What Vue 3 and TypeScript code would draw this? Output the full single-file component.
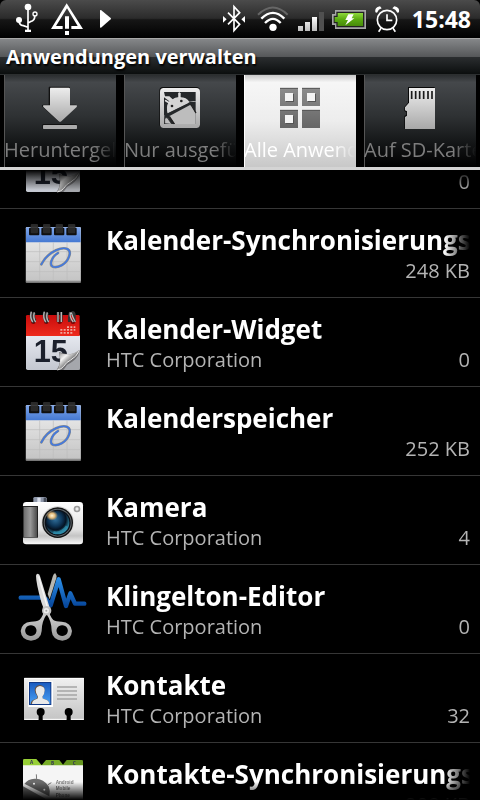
<script setup lang="ts">
interface AppEntry {
  name: string
  vendor: string
  size: string
  icon: string
}

interface Tab {
  label: string
  icon: string
}

const tabs: Tab[] = [
  { label: 'Heruntergel', icon: 'tab-download' },
  { label: 'Nur ausgefü', icon: 'tab-running' },
  { label: 'Alle Anwend', icon: 'tab-all' },
  { label: 'Auf SD-Karte', icon: 'tab-sd' },
]
const activeTab = 2

const apps: AppEntry[] = [
  { name: '', vendor: '', size: '0', icon: 'app-widget' },
  { name: 'Kalender-Synchronisierungs', vendor: '', size: '248 KB', icon: 'app-calendar' },
  { name: 'Kalender-Widget', vendor: 'HTC Corporation', size: '0', icon: 'app-widget' },
  { name: 'Kalenderspeicher', vendor: '', size: '252 KB', icon: 'app-calendar' },
  { name: 'Kamera', vendor: 'HTC Corporation', size: '4', icon: 'app-camera' },
  { name: 'Klingelton-Editor', vendor: 'HTC Corporation', size: '0', icon: 'app-ringtone' },
  { name: 'Kontakte', vendor: 'HTC Corporation', size: '32', icon: 'app-contacts' },
  { name: 'Kontakte-Synchronisierungs', vendor: '', size: '208 KB', icon: 'app-android' },
]
</script>

<template>
  <div class="screen">
    <svg class="sprites" aria-hidden="true">
      <defs>
        <linearGradient id="g-light" x1="0" y1="0" x2="0" y2="1">
          <stop offset="0" stop-color="#ededed" /><stop offset="1" stop-color="#a8a8a8" />
        </linearGradient>
        <linearGradient id="g-dark" x1="0" y1="0" x2="0" y2="1">
          <stop offset="0" stop-color="#8c8c8c" /><stop offset="1" stop-color="#666" />
        </linearGradient>
        <linearGradient id="g-page" x1="0" y1="0" x2="0" y2="1">
          <stop offset="0" stop-color="#f0f0f0" /><stop offset="1" stop-color="#c4c4c4" />
        </linearGradient>
        <linearGradient id="g-blue" x1="0" y1="0" x2="0" y2="1">
          <stop offset="0" stop-color="#7fa6ea" /><stop offset="1" stop-color="#4478d2" />
        </linearGradient>
        <linearGradient id="g-red" x1="0" y1="0" x2="0" y2="1">
          <stop offset="0" stop-color="#c80c0c" /><stop offset="1" stop-color="#ee2a1c" />
        </linearGradient>
        <linearGradient id="g-sheet" x1="0" y1="0" x2="0" y2="1">
          <stop offset="0" stop-color="#e6e9f0" /><stop offset="1" stop-color="#c3c7d0" />
        </linearGradient>
        <linearGradient id="g-curl" x1="0" y1="0" x2="1" y2="1">
          <stop offset="0.1" stop-color="#8a8a8a" /><stop offset="0.35" stop-color="#f4f4f4" />
          <stop offset="0.52" stop-color="#999" /><stop offset="0.6" stop-color="#555" />
        </linearGradient>
        <linearGradient id="g-body" x1="0" y1="0" x2="0" y2="1">
          <stop offset="0" stop-color="#fff" /><stop offset="0.65" stop-color="#e2e2e2" />
          <stop offset="0.8" stop-color="#c4c4c4" /><stop offset="1" stop-color="#fafafa" />
        </linearGradient>
        <linearGradient id="g-grip" x1="0" y1="0" x2="1" y2="0">
          <stop offset="0" stop-color="#6c6c6c" /><stop offset="0.5" stop-color="#999" /><stop offset="1" stop-color="#4c4c4c" />
        </linearGradient>
        <radialGradient id="g-lens" cx="0.4" cy="0.35" r="0.65">
          <stop offset="0" stop-color="#31709c" /><stop offset="0.45" stop-color="#0e3658" />
          <stop offset="0.7" stop-color="#041222" /><stop offset="1" stop-color="#2f8ba8" />
        </radialGradient>
        <radialGradient id="g-glow">
          <stop offset="0" stop-color="#fff6da" /><stop offset="0.5" stop-color="#e0b878" />
          <stop offset="1" stop-color="#c89858" stop-opacity="0" />
        </radialGradient>
        <linearGradient id="g-wave" x1="0" y1="0" x2="0" y2="1">
          <stop offset="0" stop-color="#2b8de6" /><stop offset="1" stop-color="#07479c" />
        </linearGradient>
        <linearGradient id="g-steel" x1="0" y1="0" x2="0" y2="1">
          <stop offset="0" stop-color="#d8d8d8" /><stop offset="1" stop-color="#999" />
        </linearGradient>
        <linearGradient id="g-photo" x1="0" y1="0" x2="0" y2="1">
          <stop offset="0" stop-color="#1a5cc0" /><stop offset="1" stop-color="#4aa0f4" />
        </linearGradient>
        <linearGradient id="g-battery" x1="0" y1="0" x2="0" y2="1">
          <stop offset="0" stop-color="#8ed83c" /><stop offset="0.5" stop-color="#5aaa10" /><stop offset="1" stop-color="#478a0a" />
        </linearGradient>
        <linearGradient id="g-bars" gradientUnits="userSpaceOnUse" x1="0" y1="50" x2="0" y2="94">
          <stop offset="0" stop-color="#fff" /><stop offset="1" stop-color="#bbb" />
        </linearGradient>
      </defs>

      <symbol id="tab-download" viewBox="114 45 132 138">
        <path d="M150 51h58q4 0 4 4v50h17q6 2 1 7l-46 42q-4 3-8 0l-46-42q-5-5 1-7h17V55q0-4 2-4z" fill="#111" transform="translate(-2 -1)" />
        <path d="M152 53h54q4 0 4 4v49h19q4 1 1 5l-46 43q-4 3-8 0l-46-43q-3-4 1-5h19V57q0-4 2-4z" fill="url(#g-light)" />
        <rect x="127" y="162" width="104" height="15" rx="3" fill="#111" />
        <rect x="129" y="165" width="102" height="12" rx="2" fill="#ababab" />
      </symbol>
      <symbol id="tab-running" viewBox="474 45 132 138">
        <rect x="478" y="51" width="122" height="122" rx="11" fill="#0c0c0c" />
        <rect x="480" y="54" width="120" height="120" rx="11" fill="url(#g-light)" />
        <path d="M492 66h95v28l-7-1-12 2q-9-13-27-13l1-13-7 0v13q-10 0-17 6l-10-9-13 0z" fill="#25282a" />
        <path d="M492 82l16 12q-11 14-5 35l-11 6zM571 95h16v67h-95l1-28 78-39z" fill="#25282a" />
        <path d="M503 129q-7-27 12-39 18-13 36-4 10 4 15 12z" fill="#d4d4d4" />
        <path d="M510 137l60-32 7 3 10 23v31h-62l-18-24z" fill="#bdbdbd" />
        <path d="M497 92l13 8M538 69l1 14" stroke="#ddd" stroke-width="5" stroke-linecap="round" />
        <path d="M573 104l15 25M508 139l15 23" stroke="#222" stroke-width="4" />
        <path d="M494 160v-13q4-8 9-2l12 17" fill="#bdbdbd" stroke="#222" stroke-width="2" />
        <circle cx="516" cy="108" r="4" fill="#222" /><circle cx="544" cy="93" r="4" fill="#222" />
      </symbol>
      <symbol id="tab-all" viewBox="114 45 132 138">
        <g fill="url(#g-dark)">
          <path d="M120 54h54v54h-54zM186 54h54v54h-54zM120 120h54v54h-54zM186 120h54v54h-54z" />
        </g>
        <path d="M120 55h54M186 55h54M120 121h54M186 121h54" stroke="#555" stroke-width="3" />
        <path d="M138 72h24v24h-24zM204 72h24v24h-24zM138 138h24v24h-24z" fill="#555" />
        <path d="M135 69h24v24h-24zM201 69h24v24h-24zM135 135h24v24h-24z" fill="#f4f4f4" />
      </symbol>
      <symbol id="tab-sd" viewBox="474 45 132 138">
        <path d="M504 51h80v125h-91v-38l6-4v-7l-6-4v-12l11-13z" fill="#080808" />
        <path d="M507 54h78v123h-90v-36l6-4v-13l-6-3v-9l12-14z" fill="url(#g-light)" />
        <path d="M515 63v24M527 63v24M539 63v24M551 63v24M564 63v24M576 63v24" stroke="#1a1a1a" stroke-width="5" />
      </symbol>

      <symbol id="app-calendar" viewBox="0 0 270 264">
        <g transform="translate(0 3)">
          <rect x="47" y="51" width="166" height="168" rx="3" fill="#777" />
          <rect x="48" y="52" width="164" height="162" rx="3" fill="url(#g-page)" />
          <path d="M48 97V54q0-2 2-2h160q2 0 2 2v43z" fill="url(#g-blue)" />
          <path d="M89 97v117M130 97v117M171 97v117M48 125h164M48 155h164M48 185h164" stroke="#bcbcbc" stroke-width="2" />
          <path d="M48 213h164" stroke="#999" stroke-width="2" />
          <g fill="#101010"><rect x="57" y="53" width="31" height="23" rx="3" /><rect x="94" y="53" width="31" height="23" rx="3" /><rect x="132" y="53" width="31" height="23" rx="3" /><rect x="169" y="53" width="31" height="23" rx="3" /></g>
          <g fill="#292929"><rect x="62" y="42" width="22" height="28" rx="3" /><rect x="99" y="42" width="22" height="28" rx="3" /><rect x="137" y="42" width="22" height="28" rx="3" /><rect x="174" y="42" width="22" height="28" rx="3" /></g>
          <path d="M63 52h20M100 52h20M138 52h20M175 52h20" stroke="#4a4a4a" stroke-width="2" />
          <path d="M94 163q15-29 44-42c28-13 48-5 39 19-8 23-33 35-48 30-11-4-7-27 15-41" fill="none" stroke="#8e8e86" stroke-width="8" stroke-linecap="round" />
          <path d="M94 163q15-29 44-42c28-13 48-5 39 19-8 23-33 35-48 30-11-4-7-27 15-41" fill="none" stroke="#4479df" stroke-width="5" stroke-linecap="round" />
        </g>
      </symbol>
      <symbol id="app-widget" viewBox="0 0 270 264">
        <g transform="translate(0 6)">
          <path d="M48 106h162v99q0 5-5 5H53q-5 0-5-5z" fill="url(#g-sheet)" />
          <path d="M48 108V49q0-4 4-4h153q4 0 4 4v59z" fill="url(#g-red)" />
          <g fill="#f0a69c">
            <path d="M171 79h6v5h-6zM181 79h6v5h-6zM191 79h5v5h-5zM151 87h6v5h-6zM161 87h6v5h-6zM171 87h6v5h-6zM181 87h6v5h-6zM191 87h5v5h-5zM151 96h6v5h-6zM161 96h6v5h-6zM171 96h6v5h-6zM181 96h6v5h-6z" />
          </g>
          <g fill="#740707"><circle cx="70" cy="65" r="7" /><circle cx="109" cy="65" r="7" /><circle cx="149" cy="65" r="7" /><circle cx="189" cy="65" r="7" /></g>
          <g fill="none" stroke="#333" stroke-width="8"><path d="M73 66q-13-6-9-29M112 66q-13-6-9-29M144 66V36M178 66q-1-20 3-29M77 62q-9-6-4-24M116 62q-9-6-4-24M154 66V36M193 66V43q-2-8-7-5" /></g>
          <g fill="none" stroke="#b8b8b8" stroke-width="4"><path d="M68 66q-9-12-4-31M107 66q-9-12-4-31M144 66V36M190 66q-12-14-9-29M77 66q-9-12-4-29M116 66q-9-12-4-29M154 66V36M196 66q-9-16-12-29" /></g>
          <text class="date" x="71" y="187">15</text>
          <path d="M210 150q-15 13-38 13l-25-7q8 35-7 54h65q5 0 5-5z" fill="#6f6f72" />
          <path d="M208 149q-18 14-36 14-13 0-24-5 8 32-7 52 12-1 20-12 6-10 20-17 18-9 27-32z" fill="url(#g-curl)" />
          <path d="M208 152q-9 19-26 28-14 7-21 19-7 9-19 11" fill="none" stroke="#eee" stroke-width="3" />
          <path d="M210 152v53q0 5-5 5h-45q6-7 11-15 19-10 25-18 9-9 14-25z" fill="#a5a7ac" />
        </g>
      </symbol>
      <symbol id="app-camera" viewBox="0 0 270 264">
        <g transform="translate(0 12)">
          <path d="M70 68V55q0-4 5-4h28q7 0 7 4v13z" fill="#8d96a8" />
          <path d="M82 53h10v14H82z" fill="#d8deea" /><path d="M101 53h7v14h-7z" fill="#454b58" />
          <rect x="39" y="66" width="180" height="127" rx="10" fill="url(#g-body)" />
          <rect x="39" y="78" width="45" height="95" fill="#222" />
          <rect x="41" y="81" width="40" height="90" fill="url(#g-grip)" />
          <circle cx="143" cy="128" r="49" fill="#d4d4d4" />
          <circle cx="143" cy="128" r="46" fill="#111" />
          <circle cx="143" cy="128" r="42" fill="#61686d" />
          <circle cx="143" cy="128" r="39" fill="#0a1018" />
          <circle cx="143" cy="128" r="35" fill="url(#g-lens)" />
          <path d="M130 157q24 6 41-18" fill="none" stroke="#349fbe" stroke-width="8" opacity=".6" />
          <ellipse cx="126" cy="107" rx="18" ry="15" fill="url(#g-glow)" />
          <circle cx="201" cy="87" r="10" fill="#9b9b9b" /><circle cx="201" cy="87" r="5" fill="#eee" />
        </g>
      </symbol>
      <symbol id="app-ringtone" viewBox="0 0 270 264">
        <path d="M32 98h64q12 0 17 11l9 12 24-78 22 80 13-38 14 31h28" fill="none" stroke="url(#g-wave)" stroke-width="13" stroke-linejoin="round" stroke-linecap="round" />
        <path d="M136 25q5 6 3 15l-20 63-6-16 14-49q4-13 9-13z" fill="#b7b7b1" />
        <path d="M83 26q6 1 7 8l31 100-16 8-11-30Q78 53 78 32q1-6 5-6z" fill="#dcdcdc" />
        <path d="M86 35l27 95" stroke="#f8f8f8" stroke-width="4" />
        <path fill-rule="evenodd" d="M102 133q-1 20-14 32-8 5-25 5-28 2-31 28 2 27 31 29 30-3 32-29 0-28 15-50 15 22 15 50 2 26 32 29 27-2 29-29-3-26-31-28-17 0-25-5-12-12-14-32zM62 181a17 16 0 1 0 1 0zM156 181a17 16 0 1 0 1 0z" fill="url(#g-steel)" />
        <circle cx="110" cy="137" r="14" fill="#c4c4c4" /><circle cx="109" cy="137" r="8" fill="#eee" /><circle cx="109" cy="137" r="3" fill="#aaa" />
      </symbol>
      <symbol id="app-contacts" viewBox="0 0 270 264">
        <g transform="translate(0 33)">
          <path d="M42 39h180v126H42z" fill="url(#g-page)" />
          <path d="M43 40h178" stroke="#fff" stroke-width="3" />
          <path d="M43 163h42M98 163h71M183 163h38" stroke="#fff" stroke-width="3" />
          <rect x="55" y="49" width="74" height="77" fill="#fff" />
          <rect x="57" y="51" width="67" height="69" fill="#123a88" />
          <rect x="60" y="54" width="61" height="63" fill="url(#g-photo)" />
          <path d="M62 117q0-10 13-14 8-2 7-9-8-10-8-19 1-14 15-15 15 1 15 15 0 12-7 20-1 6 8 8 13 4 13 14z" fill="#675243" />
          <path d="M66 117q0-10 12-14 7-2 6-8-7-10-7-19 1-12 13-13 14 1 14 13 0 11-7 19-1 6 7 8 14 4 14 14z" fill="#e9e9e9" />
          <path d="M141 66h60M141 78h60M141 90h60M141 102h60" stroke="#a5a5a5" stroke-width="5" />
          <g fill="#000"><circle cx="92" cy="141" r="12" /><circle cx="176" cy="141" r="12" /><path d="M86 149h12v18H86zM170 149h12v18h-12z" /></g>
        </g>
      </symbol>
      <symbol id="app-android" viewBox="0 0 270 264">
        <g transform="translate(-30 -9)">
          <path d="M186 78l14-18h45q4 0 4 4v16z" fill="#679821" />
          <path d="M123 78l15-18h40l14 18z" fill="#78ae28" />
          <path d="M69 80V61q0-4 4-4h36l20 23z" fill="#97cf36" />
          <text class="index" x="90" y="72">A</text><text class="index" x="153" y="76">B</text><text class="index" x="218" y="75">C</text>
          <path d="M69 76h180v115H69z" fill="#f5f5f5" />
          <g fill="#6b6b6b"><path d="M73 133q9-16 31-17 27-1 42 23 6 14 2 30L73 131z" /><path d="M69 139l67 37v20H69z" /></g>
          <path d="M109 103l1 16M144 134l10-6" stroke="#777" stroke-width="3" />
          <circle cx="102" cy="131" r="3" fill="#fff" /><circle cx="133" cy="149" r="3" fill="#fff" />
          <text class="maker" x="167" y="131">Android</text><text class="maker" x="167" y="151">Mobile</text><text class="maker" x="167" y="170">Phone</text>
        </g>
      </symbol>
    </svg>

    <header class="status">
      <div class="status-group">
        <svg width="26" height="38" viewBox="42 0 78 114" aria-label="USB">
          <g fill="none" stroke="#fff" stroke-width="5"><path d="M84 20v73M57 62q0 13 13 15l14 5M104 46q2 15-13 19l-7 4" /><circle cx="105" cy="42" r="6" stroke-width="4" /></g>
          <circle cx="84" cy="21" r="10" fill="#fff" /><circle cx="57" cy="60" r="9" fill="#fff" /><path d="M75 89h18v7H75z" fill="#fff" />
        </svg>
        <svg width="34" height="38" viewBox="150 0 102 114" aria-label="Warnung">
          <path d="M200 10l49 77h-35v-9h19l-32-53-33 53h20v9h-35z" fill="#fff" /><path d="M195 49h12v37h-12zM195 93h12v12h-12z" fill="#fff" />
        </svg>
        <svg width="20" height="38" viewBox="282 0 60 114" aria-label="Wiedergabe"><path d="M300 32q0-3 3-2l29 24q2 2 0 4l-29 25q-3 1-3-2z" fill="#fff" /></svg>
      </div>
      <div class="status-group">
        <svg width="28" height="38" viewBox="30 0 84 114" aria-label="Bluetooth">
          <path d="M54 38l35 35-17 19V20l17 18-35 35" fill="none" stroke="#fff" stroke-width="5" /><path d="M39 48l11 10-11 10zM105 48L94 58l11 10z" fill="#fff" />
        </svg>
        <svg width="34" height="38" viewBox="138 0 102 114" aria-label="WLAN">
          <g fill="none" stroke-width="6"><path d="M144 44q45-43 89 0" stroke="#666" /><path d="M154 56q35-35 69 0M165 69q24-25 47 0" stroke="#fff" stroke-width="7" /></g><circle cx="189" cy="82" r="11" fill="#fff" />
        </svg>
        <svg width="26" height="38" viewBox="264 0 78 114" aria-label="Empfang">
          <path d="M264 78h15v15h-15zM285 66h15v27h-15zM306 51h15v42h-15z" fill="url(#g-bars)" /><path d="M327 36h15v57h-15z" fill="#505050" />
        </svg>
        <svg width="34" height="38" viewBox="366 0 102 114" aria-label="Akku wird geladen">
          <path d="M375 30h93v57h-93V75h-9V42h9z" fill="#a6a6a6" /><path d="M379 35h84v47h-84V70h-8V47h8z" fill="#222" /><path d="M383 39h76v39h-76V66h-9V51h9z" fill="url(#g-battery)" /><path d="M415 43h16l-6 12h8l-27 21 8-16h-8z" fill="#fff" />
        </svg>
        <svg width="27" height="38" viewBox="492 0 81 114" aria-label="Wecker">
          <g fill="none" stroke="#fff" stroke-width="5"><circle cx="531" cy="60" r="29" /><path d="M531 43v18h16M513 85l-7 10M549 85l7 10" /></g>
          <path d="M496 37q-3-15 14-18l5 6q-10 3-14 13zM567 37q3-15-14-18l-6 6q10 3 15 13z" fill="#fff" />
        </svg>
        <time class="clock">15:48</time>
      </div>
    </header>

    <h1 class="title">Anwendungen verwalten</h1>

    <nav class="tabs" role="tablist">
      <button
        v-for="(tab, i) in tabs"
        :key="tab.icon"
        type="button"
        role="tab"
        class="tab"
        :class="{ active: i === activeTab }"
        :aria-selected="i === activeTab"
      >
        <svg class="tab-icon" aria-hidden="true"><use :href="'#' + tab.icon" /></svg>
        <span class="tab-label">{{ tab.label }}</span>
      </button>
    </nav>

    <main class="viewport">
      <ul class="list">
        <li v-for="(app, i) in apps" :key="i" class="row">
          <svg class="app-icon" aria-hidden="true"><use :href="'#' + app.icon" /></svg>
          <div class="info">
            <div class="name">{{ app.name }}</div>
            <div class="meta"><span>{{ app.vendor }}</span><span>{{ app.size }}</span></div>
          </div>
        </li>
      </ul>
    </main>
  </div>
</template>

<style>
body {
  background: #000;
}
</style>

<style scoped>
.screen {
  display: flex;
  flex-direction: column;
  height: 100vh;
  overflow: hidden;
  background: #000;
  color: #fff;
  font-family: "Open Sans", "Noto Sans", sans-serif;
}
.sprites {
  position: absolute;
  width: 0;
  height: 0;
  visibility: hidden;
}
.status {
  display: flex;
  flex: none;
  justify-content: space-between;
  height: 38px;
  padding: 0 9px 0 14px;
  border-radius: 6px 6px 0 0;
  background: linear-gradient(#4b4b4b, #2b2b2b 48%, #161616 52%, #000);
}
.status-group {
  display: flex;
  align-items: center;
  gap: 8px;
}
.status-group:first-child {
  gap: 10px;
}
.clock {
  padding-left: 3px;
  font-size: 23px;
  font-weight: 700;
  line-height: 38px;
}
.title {
  flex: none;
  margin: 0;
  padding: 0 6px;
  height: 35px;
  border-top: 1px solid #a8a8a8;
  border-bottom: 1px solid #2c2f30;
  background: linear-gradient(#858789, #56585a 50%, #2b2e30 51%, #0b0e0e);
  font-size: 20px;
  font-weight: 700;
  line-height: 35px;
  text-shadow: 1px 2px 2px #000;
}
.tabs {
  display: grid;
  flex: none;
  grid-template-columns: repeat(4, minmax(0, 1fr));
  gap: 8px;
  padding: 0 4px;
  border-bottom: 3px solid #d4d4d4;
}
.tab {
  display: flex;
  flex-direction: column;
  align-items: center;
  gap: 4px;
  height: 92px;
  padding: 10px 0 0;
  border: 0;
  overflow: hidden;
  background: linear-gradient(#2a2d2f, #45484b 8%, #2e3133 45%, #131516 75%, #000);
  box-shadow: inset 1px 0 #555;
  color: #7d7d7d;
  font: inherit;
}
.tab.active {
  background: linear-gradient(#c8c8c8, #f6f6f6 8%, #ededed 50%, #c8c8c8);
  box-shadow: inset 1px 0 #fff;
  color: #fff;
}
.tab-icon {
  flex: none;
  width: 44px;
  height: 46px;
}
.tab-label {
  align-self: stretch;
  overflow: hidden;
  font-size: 20px;
  line-height: 30px;
  text-align: left;
  white-space: nowrap;
  -webkit-mask-image: linear-gradient(90deg, #000 80%, transparent);
  mask-image: linear-gradient(90deg, #000 80%, transparent);
}
.viewport {
  flex: 1;
  min-height: 0;
  overflow: hidden;
  -webkit-mask-image: linear-gradient(transparent, #000 20px, #000 calc(100% - 18px), transparent);
  mask-image: linear-gradient(transparent, #000 20px, #000 calc(100% - 18px), transparent);
}
.list {
  margin: -50px 0 0;
  padding: 0;
  list-style: none;
}
.row {
  display: grid;
  grid-template-columns: 90px minmax(0, 1fr);
  gap: 6px;
  height: 88px;
  padding: 0 10px;
  border-bottom: 1px solid #363636;
}
.app-icon {
  width: 90px;
  height: 88px;
}
.info {
  padding-top: 13px;
}
.name {
  height: 36px;
  overflow: hidden;
  font-size: 26px;
  font-weight: 700;
  line-height: 36px;
  white-space: nowrap;
  -webkit-mask-image: linear-gradient(90deg, #000 calc(100% - 26px), transparent);
  mask-image: linear-gradient(90deg, #000 calc(100% - 26px), transparent);
}
.meta {
  display: flex;
  justify-content: space-between;
  color: #b4b4b4;
  font-size: 20px;
  line-height: 26px;
}
.date {
  fill: #1b202c;
  font: 700 92px "Liberation Sans", sans-serif;
}
.index {
  fill: #335;
  font: 700 14px "Open Sans", sans-serif;
}
.maker {
  fill: #777;
  font: 700 14px "Liberation Sans", sans-serif;
}
</style>
